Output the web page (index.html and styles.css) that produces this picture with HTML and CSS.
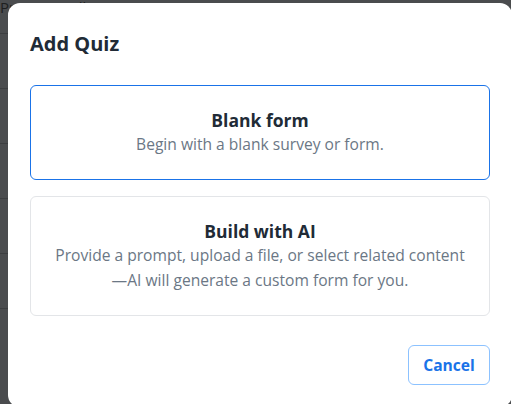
FILE: index.html
```html
<!DOCTYPE html>
<html lang="en">
<head>
  <meta charset="UTF-8" />
  <meta name="viewport" content="width=device-width, initial-scale=1" />
  <title>Add Quiz</title>
  <link rel="stylesheet" href="styles.css">
</head>
<body>
  <div class="backdrop">
    <div class="page-top">Preview &nbsp; Till</div>
    <div class="page-line"></div>
    <div class="page-line"></div>
    <div class="page-line"></div>
    <div class="page-line"></div>
    <div class="page-line"></div>
    <div class="page-line"></div>
  </div>

  <div class="modal">
    <h2 class="modal-title">Add Quiz</h2>

    <div class="options">
      <button class="option selected">
        <span class="option-title">Blank form</span>
        <span class="option-desc">Begin with a blank survey or form.</span>
      </button>
      <button class="option">
        <span class="option-title">Build with AI</span>
        <span class="option-desc">Provide a prompt, upload a file, or select related content<br>—AI will generate a custom form for you.</span>
      </button>
    </div>

    <div class="modal-footer">
      <button class="btn-cancel">Cancel</button>
    </div>
  </div>
</body>
</html>
```

FILE: styles.css
```css
body {
  margin: 0;
  width: 511px;
  height: 404px;
  overflow: hidden;
  background: #4a4c4e;
  font-family: "Open Sans", Lato, sans-serif;
  position: relative;
}

/* Página de fondo bajo el overlay */
.backdrop {
  position: absolute;
  inset: 0;
  padding-top: 33px;
}
.page-top {
  position: absolute;
  top: 0;
  left: 0;
  color: #1e1f20;
  font-size: 15px;
  line-height: 15px;
}
.page-line {
  height: 1px;
  background: #3c3e40;
  margin-bottom: 54px;
}

/* Modal */
.modal {
  position: absolute;
  top: 3px;
  left: 8px;
  width: 504px;
  height: 404px;
  background: #fff;
  border-radius: 12px;
  box-sizing: border-box;
  padding: 0 22px;
}
.modal-title {
  margin: 27px 0 28px 0;
  font-size: 20px;
  font-weight: 700;
  color: #212b36;
  line-height: 27px;
}

.options {
  display: flex;
  flex-direction: column;
  gap: 16px;
}
.option {
  display: flex;
  flex-direction: column;
  align-items: center;
  width: 460px;
  background: #fff;
  border: 1px solid #e3e5e8;
  border-radius: 6px;
  padding: 22px 10px 22px;
  font-family: inherit;
  cursor: pointer;
  text-align: center;
}
.option.selected {
  border-color: #1a73e8;
}
.option-title {
  font-size: 17.5px;
  font-weight: 700;
  color: #212b36;
  line-height: 24px;
}
.option-desc {
  font-size: 15.6px;
  color: #6b7785;
  line-height: 25px;
}

.modal-footer {
  display: flex;
  justify-content: flex-end;
  margin-top: 29px;
}
.btn-cancel {
  width: 82px;
  height: 40px;
  background: #fff;
  border: 1px solid #8cc2ff;
  border-radius: 6px;
  color: #1a73e8;
  font-family: inherit;
  font-size: 15.6px;
  font-weight: 700;
  cursor: pointer;
}
```
